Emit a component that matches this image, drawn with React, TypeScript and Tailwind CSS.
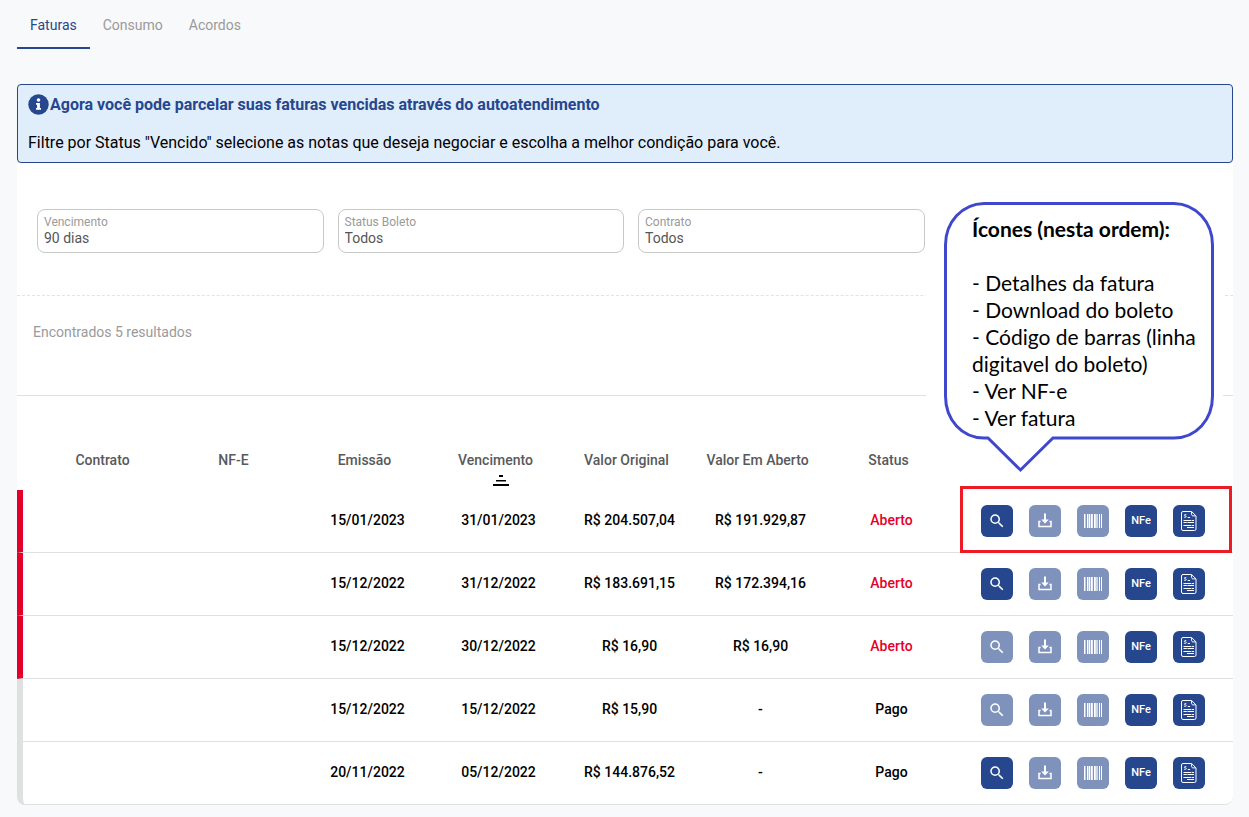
import React from "react";
import { MdSearch } from "react-icons/md";

type Row = {
  issued: string;
  due: string;
  original: string;
  open: string;
  status: "Aberto" | "Pago";
  details: boolean;
};

const rows: Row[] = [
  { issued: "15/01/2023", due: "31/01/2023", original: "R$ 204.507,04", open: "R$ 191.929,87", status: "Aberto", details: true },
  { issued: "15/12/2022", due: "31/12/2022", original: "R$ 183.691,15", open: "R$ 172.394,16", status: "Aberto", details: true },
  { issued: "15/12/2022", due: "30/12/2022", original: "R$ 16,90", open: "R$ 16,90", status: "Aberto", details: false },
  { issued: "15/12/2022", due: "15/12/2022", original: "R$ 15,90", open: "-", status: "Pago", details: false },
  { issued: "20/11/2022", due: "05/12/2022", original: "R$ 144.876,52", open: "-", status: "Pago", details: true },
];

const filters = [
  { id: "vencimento", label: "Vencimento", value: "90 dias" },
  { id: "status-boleto", label: "Status Boleto", value: "Todos" },
  { id: "contrato", label: "Contrato", value: "Todos" },
];

const tabs = ["Faturas", "Consumo", "Acordos"];

function InfoIcon() {
  return (
    <svg viewBox="0 0 21 21" className="mr-px mb-0.5 size-[21px] shrink-0" aria-hidden="true">
      <circle cx="10.5" cy="10.5" r="10.2" fill="#26478d" />
      <circle cx="10.5" cy="6" r="1.8" fill="#fff" />
      <path d="M8 9h3.9v5H13v1.8H8V14h1.1v-3.2H8z" fill="#fff" />
    </svg>
  );
}

function DownloadIcon() {
  return (
    <svg viewBox="0 0 14 16" className="h-4 w-3.5" fill="none" stroke="#fff" aria-hidden="true">
      <path d="M2.6 8.4H1v5.2h12V8.4h-1.6" strokeWidth="1.5" />
      <path d="M7 .5V8" strokeWidth="2" />
      <path d="M3.2 6.4h7.6L7 10.6z" fill="#fff" stroke="none" />
    </svg>
  );
}

function BarcodeIcon() {
  return (
    <svg viewBox="0 0 18 14" className="h-3.5 w-[18px]" fill="#fff" aria-hidden="true">
      <path d="M0 0h1.5v14H0zM3 0h1v14H3zM4.5 0h1.8v14H4.5zM7 0h1.8v14H7zM10 0h1.8v14H10zM12.4 0h1.2v14h-1.2zM15 0h1v14h-1zM17 0h1v14h-1z" />
    </svg>
  );
}

function InvoiceIcon() {
  return (
    <svg viewBox="0 0 16 20" className="h-5 w-4" fill="none" stroke="#fff" aria-hidden="true">
      <path d="M2 .5h8.6l4.4 4.4v13.1a1.5 1.5 0 0 1-1.5 1.5H2A1.5 1.5 0 0 1 .5 18V2A1.5 1.5 0 0 1 2 .5z" strokeWidth="1" />
      <path d="M10.6.8v2.6c0 .9.6 1.5 1.5 1.5h2.6" strokeWidth="1" />
      <path d="M5.3 3.6H4c-.8 0-.8 1.3 0 1.3h.6c.9 0 .9 1.4 0 1.4H3.1" strokeWidth=".9" />
      <path d="M6.8 6.5H9M2.5 9.5h7.7M10.8 9.5h2.2M2.5 11.5h3.3M6.4 11.5H13M2.5 14.5h7.9M11 14.5h2M6 16.5h7" strokeWidth="1.2" />
    </svg>
  );
}

function ActionButton({ label, faded, children }: { label: string; faded?: boolean; children: React.ReactNode }) {
  return (
    <button
      type="button"
      aria-label={label}
      className={`flex size-8 items-center justify-center rounded-md text-[11px] font-medium text-white ${faded ? "bg-[#7f92bc]" : "bg-[#26478d]"}`}
    >
      {children}
    </button>
  );
}

function Callout() {
  return (
    <aside className="absolute top-[27px] right-2.5 h-[290px] w-[297px] bg-white pt-[25px] pl-[46px] font-['Lato',sans-serif] text-[21px] leading-[27px] text-black">
      <svg viewBox="0 0 297 290" className="absolute inset-0 size-full" fill="none" stroke="#3f48cc" strokeWidth="3" aria-hidden="true">
        <path d="M58 13.5H248C270 14 286.5 32 286.5 55V206C286.5 230 270 248 248 248H127L94.5 280L62 248H58C36 248 19.5 230 19.5 206V55C19.5 32 36 14 58 13.5Z" />
      </svg>
      <div className="relative whitespace-nowrap">
        <p className="mb-[27px] font-bold">Ícones (nesta ordem):</p>
        <p>- Detalhes da fatura</p>
        <p>- Download do boleto</p>
        <p>
          - Código de barras (linha
          <br />
          digitavel do boleto)
        </p>
        <p>- Ver NF-e</p>
        <p>- Ver fatura</p>
      </div>
    </aside>
  );
}

export default function App() {
  return (
    <div className="min-h-screen bg-[#f8f9fb] pr-4 pb-3 pl-[17px] font-['Roboto',sans-serif] text-sm text-black">
      <nav className="flex">
        {tabs.map((tab, i) => (
          <a
            key={tab}
            href={`#${tab.toLowerCase()}`}
            className={`border-b-2 px-[13px] pt-[15px] pb-3 leading-5 ${i === 0 ? "border-[#26478d] text-[#26478d]" : "border-transparent text-[#9a9a9a]"}`}
          >
            {tab}
          </a>
        ))}
      </nav>

      <main className="mt-[35px]">
        <section className="rounded border border-[#26478d] bg-[#e0edfb] px-2.5 pt-2 pb-[7px] text-base">
          <h2 className="flex items-center font-bold text-[#26478d]">
            <InfoIcon />
            Agora você pode parcelar suas faturas vencidas através do autoatendimento
          </h2>
          <p className="mt-3.5">
            Filtre por Status "Vencido" selecione as notas que deseja negociar e escolha a melhor condição para você.
          </p>
        </section>

        <section className="relative rounded-b-lg bg-white">
          <form className="grid grid-cols-4 gap-3.5 border-b border-dashed border-[#e3e3e3] pt-[46px] pr-2 pb-[42px] pl-5">
            {filters.map((f) => (
              <div key={f.id} className="flex h-11 flex-col rounded-lg border border-[#c8c8c8] px-1.5 pt-1">
                <label htmlFor={f.id} className="text-xs leading-4 text-[#9a9a9a]">
                  {f.label}
                </label>
                <select id={f.id} defaultValue={f.value} className="w-full appearance-none bg-transparent text-sm leading-4 text-[#555]">
                  <option>{f.value}</option>
                </select>
              </div>
            ))}
          </form>

          <p className="border-b border-[#dfe0e0] px-4 pt-[26px] pb-[53px] leading-5 text-[#9a9a9a]">Encontrados 5 resultados</p>

          <Callout />

          <table className="w-full table-fixed border-separate border-spacing-0 text-center font-medium">
            <colgroup>
              <col className="w-[151px]" />
              <col span={6} />
              <col className="w-[279px]" />
            </colgroup>
            <thead>
              <tr className="h-[94px] align-top leading-5 text-[#58595b]">
                <th className="pt-[54px] pl-5 font-medium">Contrato</th>
                <th className="pt-[54px] font-medium">NF-E</th>
                <th className="pt-[54px] font-medium">Emissão</th>
                <th className="pt-[54px] font-medium" aria-sort="descending">
                  <button type="button" className="block w-full">
                    Vencimento
                    <svg viewBox="0 0 16 11" className="mx-auto mt-[5px] h-[11px] w-[27px] pl-[11px]" fill="#000" aria-hidden="true">
                      <path d="M6 0h4v2H6zM3 5h10v1.5H3zM0 9h16v2H0z" />
                    </svg>
                  </button>
                </th>
                <th className="pt-[54px] font-medium">Valor Original</th>
                <th className="pt-[54px] font-medium">Valor Em Aberto</th>
                <th className="pt-[54px] font-medium">Status</th>
                <th aria-label="Ações" />
              </tr>
            </thead>
            <tbody>
              {rows.map((r, i) => {
                const line = "border-b border-[#dfe0e0] pb-0.5 pl-1.5";
                const overdue = r.status === "Aberto";
                return (
                  <tr key={i} className="h-[63px]">
                    <td
                      className={`border-b border-l-[6px] border-b-[#dfe0e0] ${overdue ? "border-l-[#e4002b]" : "border-l-[#dfe0e0]"} ${i === rows.length - 1 ? "rounded-bl-lg" : ""}`}
                    />
                    <td className={line} />
                    <td className={line}>{r.issued}</td>
                    <td className={line}>{r.due}</td>
                    <td className={line}>{r.original}</td>
                    <td className={line}>{r.open}</td>
                    <td className={`${line} ${overdue ? "text-[#e4002b]" : ""}`}>{r.status}</td>
                    <td className={`relative border-b border-[#dfe0e0] ${i === rows.length - 1 ? "rounded-br-lg" : ""}`}>
                      <div className="flex justify-end gap-4 pr-7">
                        <ActionButton label="Detalhes da fatura" faded={!r.details}>
                          <MdSearch className="size-[18px]" />
                        </ActionButton>
                        <ActionButton label="Download do boleto" faded>
                          <DownloadIcon />
                        </ActionButton>
                        <ActionButton label="Código de barras" faded>
                          <BarcodeIcon />
                        </ActionButton>
                        <ActionButton label="Ver NF-e">NFe</ActionButton>
                        <ActionButton label="Ver fatura">
                          <InvoiceIcon />
                        </ActionButton>
                      </div>
                      {i === 0 && (
                        <div className="pointer-events-none absolute -top-1 right-px -bottom-px left-1.5 z-10 border-[3px] border-[#ed1c24]" />
                      )}
                    </td>
                  </tr>
                );
              })}
            </tbody>
          </table>
        </section>
      </main>
    </div>
  );
}
